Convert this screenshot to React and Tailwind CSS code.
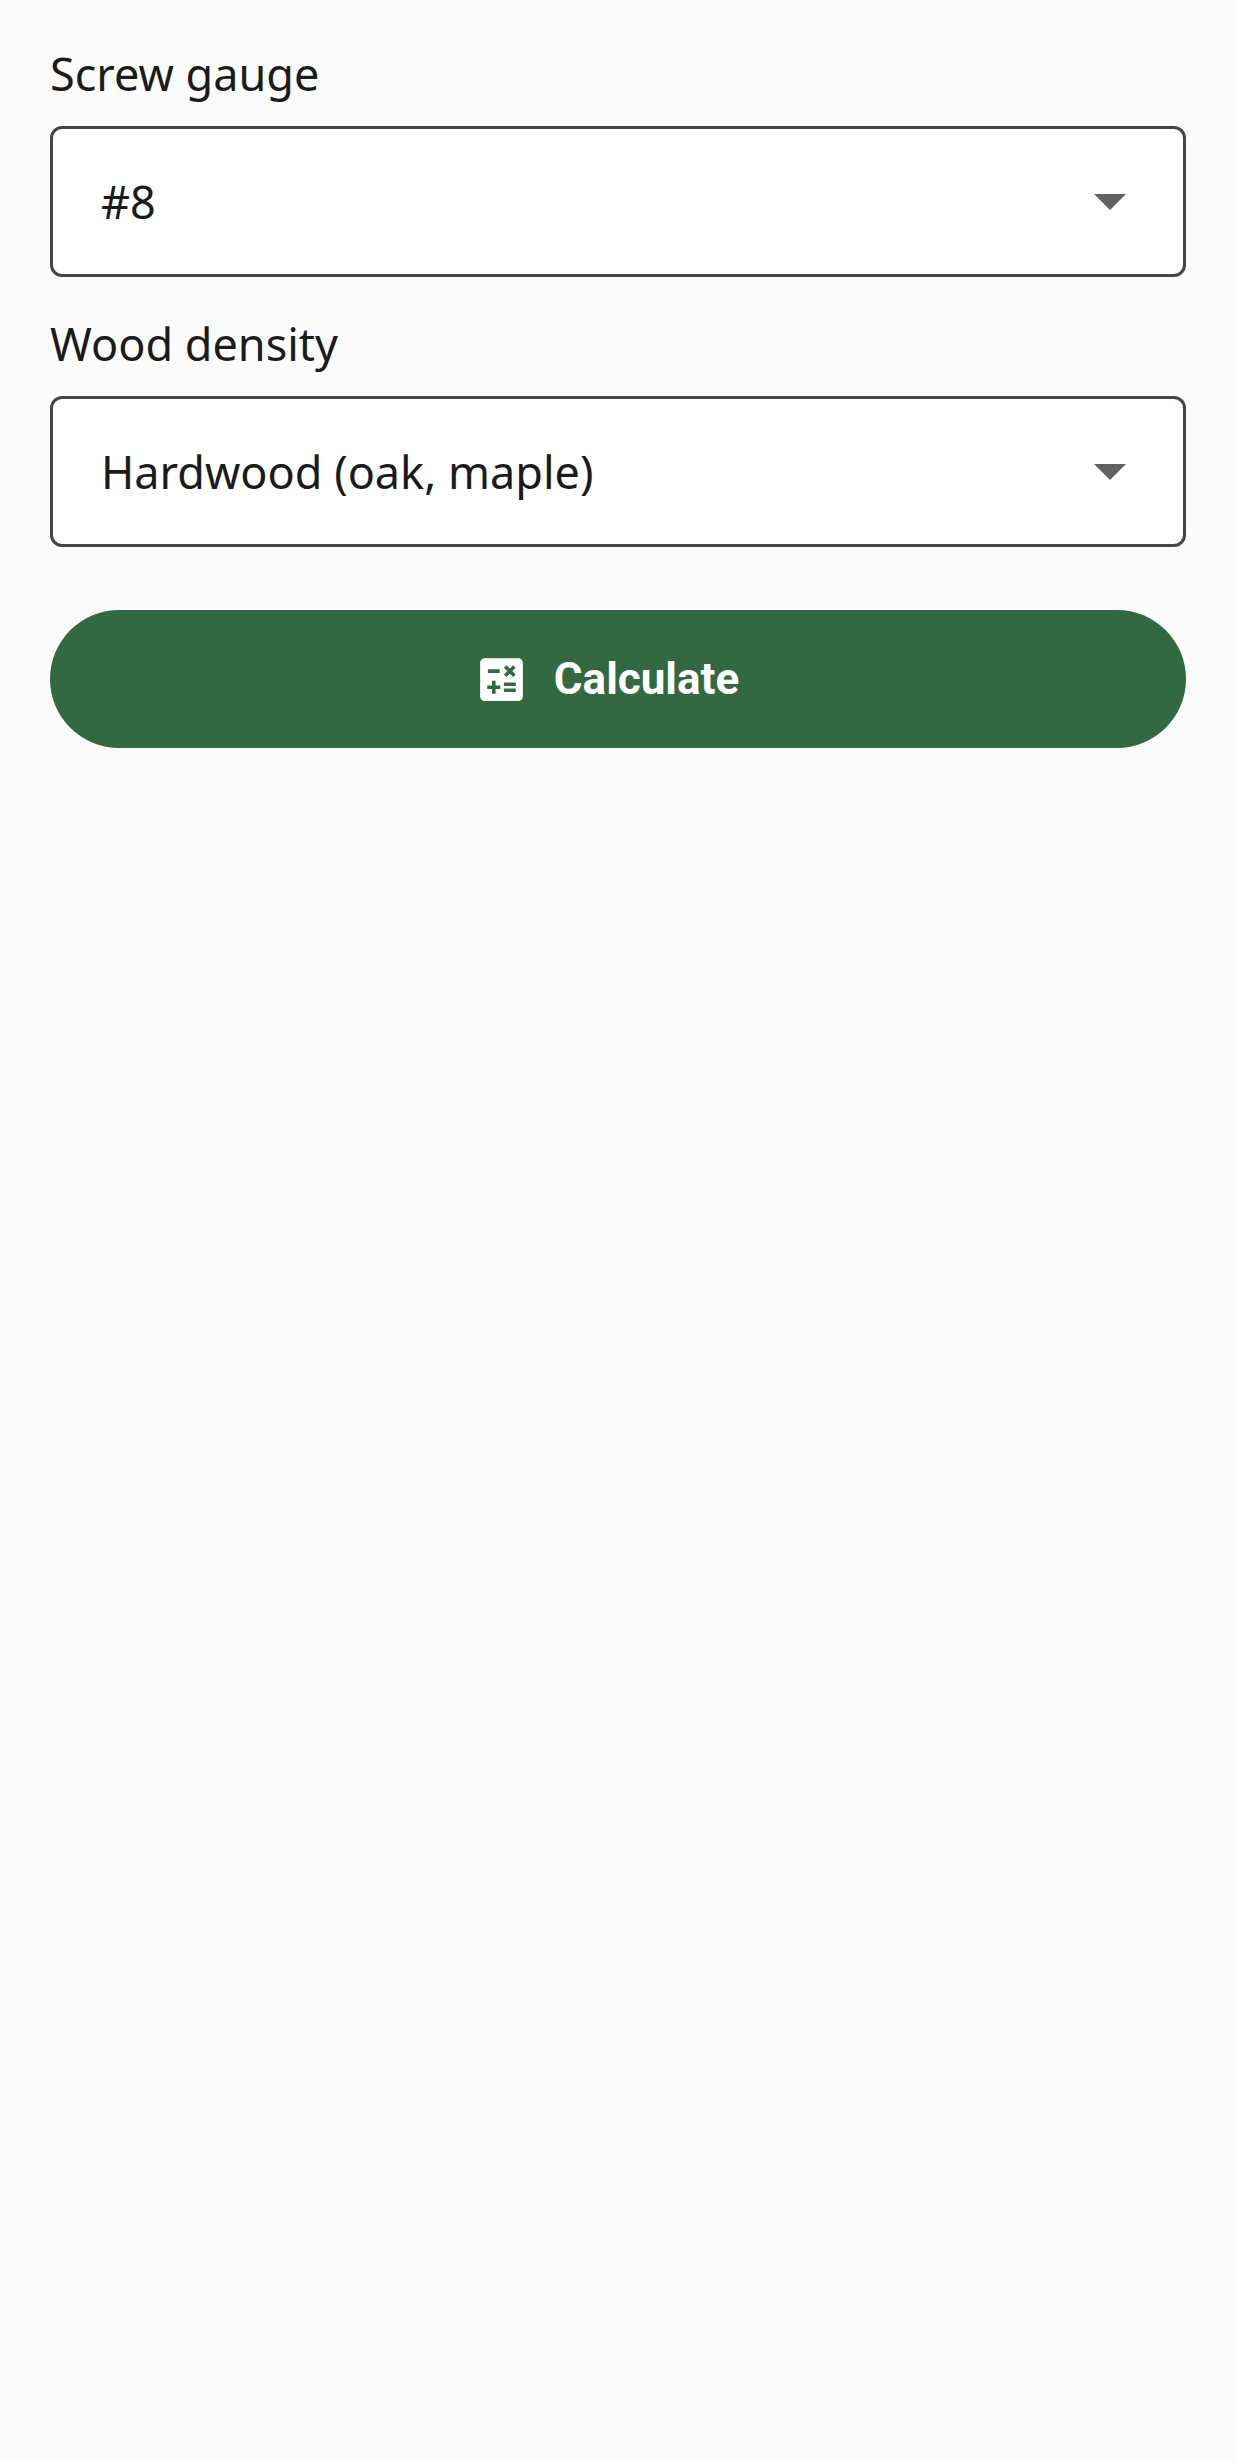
import React, { useState } from "react";

const gauges = ["#4", "#6", "#8", "#10", "#12", "#14"];
const densities = ["Softwood (pine, fir)", "Hardwood (oak, maple)"];

function SelectField({ id, label, value, options, onChange }) {
  return (
    <div className="flex flex-col gap-[26px]">
      <label htmlFor={id} className="text-[45px] leading-[52px]">
        {label}
      </label>
      <div className="grid items-center">
        <select
          id={id}
          value={value}
          onChange={(e) => onChange(e.target.value)}
          className="col-start-1 row-start-1 h-[151px] w-full appearance-none rounded-xl border-3 border-[#43474a] bg-white px-12 text-[45px]"
        >
          {options.map((option) => (
            <option key={option}>{option}</option>
          ))}
        </select>
        <svg
          viewBox="0 0 32 16"
          className="pointer-events-none col-start-1 row-start-1 mr-[60px] h-4 w-8 justify-self-end fill-[#616161]"
          aria-hidden="true"
        >
          <path d="M0 0h32L16 16z" />
        </svg>
      </div>
    </div>
  );
}

function CalculateIcon() {
  return (
    <svg viewBox="0 0 24 24" className="size-[57px] fill-current" aria-hidden="true">
      <path d="M19 3H5c-1.1 0-2 .9-2 2v14c0 1.1.9 2 2 2h14c1.1 0 2-.9 2-2V5c0-1.1-.9-2-2-2zm-5.97 4.06L14.09 6l1.41 1.41L16.91 6l1.06 1.06-1.41 1.41 1.41 1.41-1.06 1.06-1.41-1.4-1.41 1.41-1.06-1.06 1.41-1.41-1.41-1.42zm-6.78.66h5v1.5h-5v-1.5zM11.5 16h-2v2H8v-2H6v-1.5h2v-2h1.5v2h2V16zm6.5 1.25h-5v-1.5h5v1.5zm0-2.5h-5v-1.5h5v1.5z" />
    </svg>
  );
}

function App() {
  const [gauge, setGauge] = useState("#8");
  const [density, setDensity] = useState("Hardwood (oak, maple)");

  return (
    <main className="min-h-screen bg-[#fbfbfb] px-[50px] pt-12 font-['Noto_Sans',sans-serif] text-[#1a1c1b]">
      <form className="flex flex-col" onSubmit={(e) => e.preventDefault()}>
        <div className="flex flex-col gap-[41px]">
          <SelectField
            id="gauge"
            label="Screw gauge"
            value={gauge}
            options={gauges}
            onChange={setGauge}
          />
          <SelectField
            id="density"
            label="Wood density"
            value={density}
            options={densities}
            onChange={setDensity}
          />
        </div>
        <button
          type="submit"
          className="mt-[63px] flex h-[138px] w-full items-center justify-center gap-6 rounded-full bg-[#326941] pr-6 font-['Roboto',sans-serif] text-[44px] font-bold text-white"
        >
          <CalculateIcon />
          Calculate
        </button>
      </form>
    </main>
  );
}

export default App;
